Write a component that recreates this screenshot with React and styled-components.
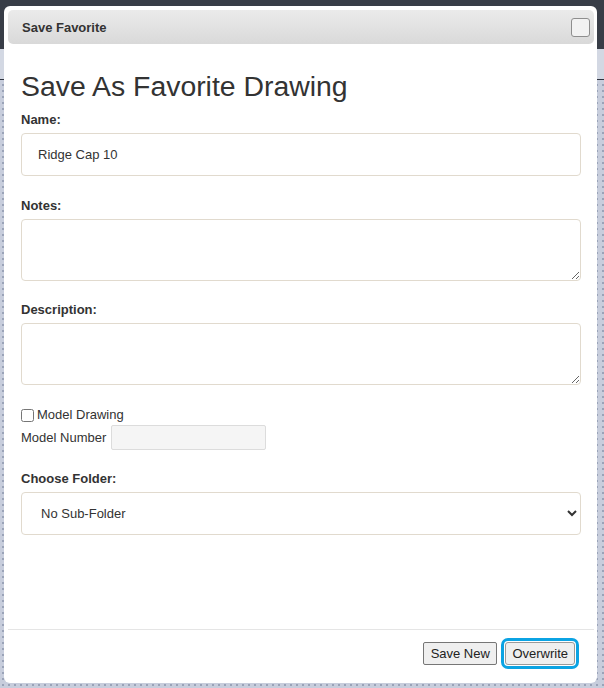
import React from "react";
import styled, { createGlobalStyle } from "styled-components";

const Global = createGlobalStyle`
  html, body { margin: 0; padding: 0; }
  body {
    width: 604px; height: 688px; overflow: hidden;
    font-family: "Liberation Sans", Arial, sans-serif;
    background: #c7cddc;
  }
`;

const Page = styled.div`
  width: 604px;
  height: 688px;
  display: flex;
  flex-direction: column;
  background: #c7cddc;
`;

const TopBar = styled.div`
  height: 49px;
  background: #383d47;
`;

const SubBar = styled.div`
  height: 30px;
  background: #d3d8e3;
  border-bottom: 1px solid #2f3440;
`;

const PageBody = styled.div`
  flex: 1;
  background: #c7cddc;
  background-image: radial-gradient(#9aa3b8 1px, transparent 1px);
  background-size: 6px 6px;
  background-position: 0 2px;
`;

const Dialog = styled.div`
  position: absolute;
  left: 4px;
  top: 6px;
  width: 593px;
  height: 677px;
  background: #fff;
  border-radius: 6px;
  display: flex;
  flex-direction: column;
  box-sizing: border-box;
  padding: 4px 3px 4px 4px;
`;

const TitleBar = styled.div`
  height: 34px;
  border-radius: 5px;
  background: linear-gradient(#ebebeb, #d9d9d9);
  display: flex;
  align-items: center;
  justify-content: space-between;
  padding: 0 4px 0 14px;
  flex-shrink: 0;
`;

const TitleText = styled.span`
  font-size: 13px;
  font-weight: bold;
  color: #333;
`;

const CloseBox = styled.button`
  width: 19px;
  height: 19px;
  border: 1px solid #8e8e8e;
  border-radius: 3px;
  background: #f2f2f2;
  padding: 0;
`;

const Content = styled.div`
  flex: 1;
  padding: 26px 13px 0 13px;
  display: flex;
  flex-direction: column;
`;

const Heading = styled.h1`
  margin: 0 0 10px 0;
  font-size: 28.4px;
  font-weight: normal;
  color: #333;
  line-height: 32px;
`;

const Label = styled.label`
  display: block;
  font-size: 13px;
  font-weight: bold;
  color: #333;
  line-height: 15px;
  margin-bottom: 6px;
`;

const TextInput = styled.input`
  box-sizing: border-box;
  display: block;
  width: 100%;
  height: 43px;
  border: 1px solid #e1dace;
  border-radius: 4px;
  padding: 0 16px;
  font-family: "Liberation Sans", Arial, sans-serif;
  font-size: 13px;
  color: #333;
  margin: 0 0 22px 0;
  outline: none;
`;

const TextArea = styled.textarea`
  box-sizing: border-box;
  width: 100%;
  height: 62px;
  border: 1px solid #e1dace;
  border-radius: 4px;
  padding: 8px 16px;
  font-family: "Liberation Sans", Arial, sans-serif;
  font-size: 13px;
  margin: 0 0 ${(p) => p.$gap}px 0;
  display: block;
  resize: vertical;
  outline: none;
`;

const CheckRow = styled.label`
  display: flex;
  align-items: center;
  font-size: 13px;
  color: #333;
  line-height: 16px;
  gap: 3px;
`;

const Check = styled.input`
  margin: 0;
  width: 13px;
  height: 13px;
`;

const ModelRow = styled.div`
  display: flex;
  align-items: center;
  gap: 5px;
  font-size: 13px;
  color: #333;
  margin-top: 2px;
  margin-bottom: 21px;
`;

const SmallInput = styled.input`
  box-sizing: border-box;
  width: 155px;
  height: 25px;
  border: 1px solid #dcdcdc;
  border-radius: 2px;
  background: #f5f5f5;
  outline: none;
`;

const Select = styled.select`
  box-sizing: border-box;
  width: 100%;
  height: 43px;
  border: 1px solid #e1dace;
  border-radius: 4px;
  padding: 0 15px;
  font-family: "Liberation Sans", Arial, sans-serif;
  font-size: 13px;
  color: #333;
  background: #fff;
  outline: none;
`;

const Footer = styled.div`
  height: 50px;
  box-sizing: border-box;
  border-top: 1px solid #e5e5e5;
  display: flex;
  align-items: flex-start;
  justify-content: flex-end;
  gap: 8px;
  padding: 12px 19px 0 0;
  flex-shrink: 0;
`;

const Button = styled.button`
  font-family: "Liberation Sans", Arial, sans-serif;
  font-size: 13px;
  color: #222;
  background: #efefef;
  border: 1px solid #767676;
  border-radius: 2px;
  height: 23px;
  padding: 0 ${(p) => (p.$focus ? 6 : 6.5)}px;
  ${(p) =>
    p.$focus &&
    `outline: 3px solid #0ba3e3; outline-offset: 1px; border-radius: 3px; border-color: #9a9a9a;`}
`;

export default function App() {
  return (
    <>
      <Global />
      <Page>
        <TopBar />
        <SubBar />
        <PageBody />
      </Page>
      <Dialog>
        <TitleBar>
          <TitleText>Save Favorite</TitleText>
          <CloseBox aria-label="close" />
        </TitleBar>
        <Content>
          <Heading>Save As Favorite Drawing</Heading>
          <Label>Name:</Label>
          <TextInput defaultValue="Ridge Cap 10" />
          <Label>Notes:</Label>
          <TextArea $gap={21} />
          <Label>Description:</Label>
          <TextArea $gap={22} />
          <CheckRow>
            <Check type="checkbox" />
            Model Drawing
          </CheckRow>
          <ModelRow>
            Model Number
            <SmallInput />
          </ModelRow>
          <Label>Choose Folder:</Label>
          <Select defaultValue="none">
            <option value="none">No Sub-Folder</option>
          </Select>
        </Content>
        <Footer>
          <Button>Save New</Button>
          <Button $focus>Overwrite</Button>
        </Footer>
      </Dialog>
    </>
  );
}
